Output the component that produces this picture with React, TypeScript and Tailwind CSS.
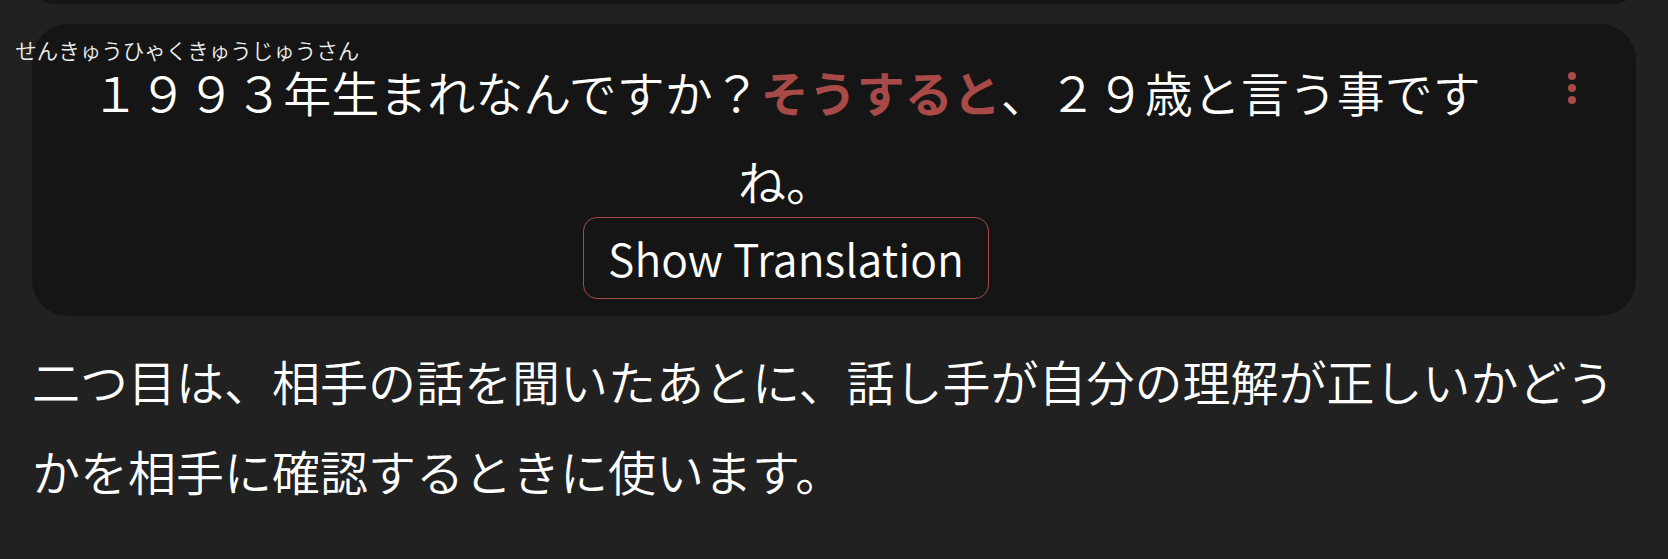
const jp = 'font-["Noto_Sans_CJK_JP","Noto_Sans",sans-serif]';

function MoreButton() {
  return (
    <button className="mt-[17px] flex h-12 w-12 shrink-0 items-center justify-center text-[#a84b48]">
      <svg width="48" height="48" viewBox="0 0 24 24" fill="currentColor">
        <circle cx="12" cy="6" r="2" />
        <circle cx="12" cy="12" r="2" />
        <circle cx="12" cy="18" r="2" />
      </svg>
    </button>
  );
}

export default function App() {
  const accent = '#a84b48';

  return (
    <div className={`min-h-screen overflow-hidden bg-[#212121] px-8 font-[350] text-white ${jp}`}>
      {/* tail of the previous sentence card */}
      <div className="-mt-[40px] h-[44px] rounded-[36px] bg-[#151515]" />

      <div className="mt-5 flex items-start gap-8 rounded-[36px] bg-[#151515] pt-[23px] pb-[17px] pl-6 pr-10">
        <div className="flex flex-1 flex-col items-center">
          <p className="w-full text-center text-[48px] leading-[89px]">
            <span className="relative inline-block">
              <span className="absolute left-1/2 top-[-12px] -translate-x-1/2 whitespace-nowrap text-[21.5px] leading-[30px] text-[#eeeeee]">
                せんきゅうひゃくきゅうじゅうさん
              </span>
              １９９３
            </span>
            年生まれなんですか？
            <span className="font-bold" style={{ color: accent }}>そうすると</span>
            、２９歳と言う事ですね。
          </p>
          <button className="-mt-[8px] rounded-[14px] border-[1.5px] border-[#a84b48] px-6 py-1 text-[44.5px] leading-[72px]">
            Show Translation
          </button>
        </div>
        <MoreButton />
      </div>

      <p className="mt-[20px] text-[48px] leading-[89.5px]">
        二つ目は、相手の話を聞いたあとに、話し手が自分の理解が正しいかどうかを相手に確認するときに使います。
      </p>
    </div>
  );
}
